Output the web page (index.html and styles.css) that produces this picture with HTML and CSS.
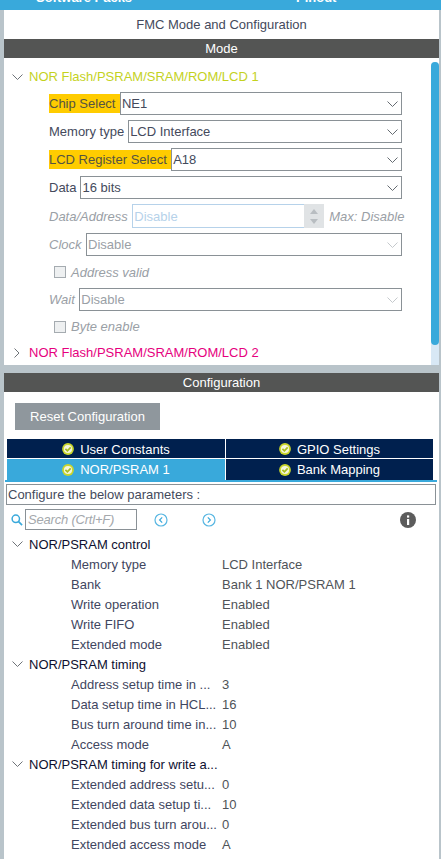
FILE: index.html
```html
<!DOCTYPE html>
<html lang="en">
<head>
<meta charset="utf-8">
<title>FMC Mode and Configuration</title>
<link rel="stylesheet" href="styles.css">
</head>
<body>
<svg class="defs" width="0" height="0" aria-hidden="true">
  <symbol id="down" viewBox="0 0 12 12"><path d="M.5 3.5l5 5 5-5" fill="none" stroke="currentColor" stroke-width="1"/></symbol>
  <symbol id="right" viewBox="0 0 12 12"><path d="M2.5 1.5 7 6l-4.5 4.5" fill="none" stroke="currentColor" stroke-width="1"/></symbol>
  <symbol id="ok" viewBox="0 0 12 12"><circle cx="6" cy="6" r="5.9" fill="#c9d62b"/><circle cx="6" cy="6" r="4.1" fill="#f4f6dc"/><path d="M3.4 5.9 5.4 7.9 8.7 4.4" fill="none" stroke="#a9bd1e" stroke-width="1.7"/></symbol>
</svg>
<div class="topbar"><span class="top-a">Software Packs</span><span class="top-b">Pinout</span></div>
<main class="mode-panel">
  <div class="title">FMC Mode and Configuration</div>
  <div class="bar">Mode</div>
  <div class="mode-body">
    <div class="mode-scroll">
      <div class="group-head lime"><svg class="twist"><use href="#down"/></svg>NOR Flash/PSRAM/SRAM/ROM/LCD 1</div>
      <div class="field"><span class="lbl hot">Chip Select</span><div class="select"><span>NE1</span><svg class="caret"><use href="#down"/></svg></div></div>
      <div class="field"><span class="lbl">Memory type</span><div class="select"><span>LCD Interface</span><svg class="caret"><use href="#down"/></svg></div></div>
      <div class="field"><span class="lbl hot">LCD Register Select</span><div class="select"><span>A18</span><svg class="caret"><use href="#down"/></svg></div></div>
      <div class="field"><span class="lbl">Data</span><div class="select"><span>16 bits</span><svg class="caret"><use href="#down"/></svg></div></div>
      <div class="field off tall">
        <span class="lbl">Data/Address</span>
        <div class="spin"><span>Disable</span><div class="spin-btn"><i class="up"></i><i class="dn"></i></div></div>
        <span class="max">Max: Disable</span>
      </div>
      <div class="field off"><span class="lbl">Clock</span><div class="select"><span>Disable</span><svg class="caret"><use href="#down"/></svg></div></div>
      <div class="check-row"><i class="box"></i>Address valid</div>
      <div class="field off tight"><span class="lbl">Wait</span><div class="select"><span>Disable</span><svg class="caret"><use href="#down"/></svg></div></div>
      <div class="check-row low"><i class="box"></i>Byte enable</div>
      <div class="group-head pink"><svg class="twist"><use href="#right"/></svg>NOR Flash/PSRAM/SRAM/ROM/LCD 2</div>
    </div>
    <div class="scrollbar"><div class="thumb"></div></div>
  </div>
</main>
<section class="config-panel">
  <div class="bar">Configuration</div>
  <div class="btn-wrap"><button class="reset">Reset Configuration</button></div>
  <div class="tabs">
    <div class="tab"><svg class="ok"><use href="#ok"/></svg>User Constants</div>
    <div class="tab"><svg class="ok"><use href="#ok"/></svg>GPIO Settings</div>
    <div class="tab active"><svg class="ok"><use href="#ok"/></svg>NOR/PSRAM 1</div>
    <div class="tab"><svg class="ok"><use href="#ok"/></svg>Bank Mapping</div>
  </div>
  <div class="tab-line"></div>
  <div class="hint">Configure the below parameters :</div>
  <div class="tools">
    <svg class="mag" viewBox="0 0 13 13"><circle cx="5.2" cy="5.2" r="4" fill="none" stroke="#39a9db" stroke-width="1.6"/><path d="M8 8l4 4" stroke="#39a9db" stroke-width="1.8"/></svg>
    <div class="search">Search (Crtl+F)</div>
    <svg class="nav nav-a" viewBox="0 0 14 14"><circle cx="7" cy="7" r="6" fill="none" stroke="#57b6e2" stroke-width="1.2"/><path d="M8.2 4.4 5.6 7l2.6 2.6" fill="none" stroke="#39a9db" stroke-width="1.2"/></svg>
    <svg class="nav nav-b" viewBox="0 0 14 14"><circle cx="7" cy="7" r="6" fill="none" stroke="#57b6e2" stroke-width="1.2"/><path d="M5.8 4.4 8.4 7l-2.6 2.6" fill="none" stroke="#39a9db" stroke-width="1.2"/></svg>
    <svg class="info" viewBox="0 0 16 16"><circle cx="8" cy="8" r="8" fill="#5c5c5c"/><rect x="7" y="7" width="2.2" height="6" fill="#fff"/><rect x="7" y="3.4" width="2.2" height="2.2" fill="#fff"/></svg>
  </div>
  <div class="tree">
    <div class="t-head"><svg class="twist"><use href="#down"/></svg>NOR/PSRAM control</div>
    <div class="t-row"><span class="k">Memory type</span><span class="v">LCD Interface</span></div>
    <div class="t-row"><span class="k">Bank</span><span class="v">Bank 1 NOR/PSRAM 1</span></div>
    <div class="t-row"><span class="k">Write operation</span><span class="v">Enabled</span></div>
    <div class="t-row"><span class="k">Write FIFO</span><span class="v">Enabled</span></div>
    <div class="t-row"><span class="k">Extended mode</span><span class="v">Enabled</span></div>
    <div class="t-head"><svg class="twist"><use href="#down"/></svg>NOR/PSRAM timing</div>
    <div class="t-row"><span class="k">Address setup time in ...</span><span class="v">3</span></div>
    <div class="t-row"><span class="k">Data setup time in HCL...</span><span class="v">16</span></div>
    <div class="t-row"><span class="k">Bus turn around time in...</span><span class="v">10</span></div>
    <div class="t-row"><span class="k">Access mode</span><span class="v">A</span></div>
    <div class="t-head"><svg class="twist"><use href="#down"/></svg>NOR/PSRAM timing for write a...</div>
    <div class="t-row"><span class="k">Extended address setu...</span><span class="v">0</span></div>
    <div class="t-row"><span class="k">Extended data setup ti...</span><span class="v">10</span></div>
    <div class="t-row"><span class="k">Extended bus turn arou...</span><span class="v">0</span></div>
    <div class="t-row"><span class="k">Extended access mode</span><span class="v">A</span></div>
  </div>
</section>
</body>
</html>
```
FILE: styles.css
```css
* { box-sizing: border-box; }
html, body { margin: 0; padding: 0; }
body {
  width: 441px;
  height: 859px;
  overflow: hidden;
  background: #b9c4ca;
  font-family: "Liberation Sans", Arial, sans-serif;
  font-size: 13px;
  color: #444a5c;
}
.defs { position: absolute; }
.topbar {
  height: 10px;
  background: #39a9db;
  overflow: hidden;
  display: flex;
  align-items: flex-end;
  color: #fff;
  font-weight: bold;
  font-size: 13px;
  line-height: 15px;
}
.topbar span { display: block; flex: none; transform: translateY(-5px); }
.top-a { margin-left: 36px; width: 260px; }
.mode-panel {
  margin: 0 2px 0 4px;
  height: 355px;
  background: #fff;
  display: flex;
  flex-direction: column;
}
.title {
  height: 29px;
  line-height: 29px;
  text-align: center;
}
.bar {
  height: 19px;
  line-height: 19px;
  background: #545554;
  color: #fff;
  text-align: center;
}
.mode-body {
  flex: 1;
  display: flex;
  min-height: 0;
}
.mode-scroll { flex: 1; min-width: 0; padding: 8px 29px 0 0; }
.group-head {
  height: 21px;
  line-height: 21px;
  display: flex;
  align-items: center;
  padding-left: 8px;
}
.twist { width: 12px; height: 12px; margin-right: 5px; color: #6e7378; flex: none; }
.lime { color: #c4d21e; }
.pink { color: #e6007e; }
.field {
  height: 23px;
  margin: 5px 0 0 45px;
  display: flex;
  align-items: center;
}
.tall { height: 24px; }
.lbl { padding-right: 4px; white-space: nowrap; flex: none; }
.hot { background: #ffcc00; height: 19px; line-height: 19px; color: #555342; padding-right: 4.4px; }
.select {
  flex: 1;
  height: 23px;
  border: 1px solid #8a9196;
  display: flex;
  align-items: center;
  justify-content: space-between;
  padding-left: 1px;
  padding-right: 2.5px;
  min-width: 0;
}
.caret { width: 12px; height: 12px; color: #666c72; flex: none; }
.off { color: #9aa0a6; font-style: italic; }
.off .lbl { padding-right: 4.5px; }
.off .select { font-style: normal; }
.off .caret { color: #c5c9cc; }
.spin {
  width: 192px;
  height: 24px;
  border: 1px solid #b6d2ea;
  display: flex;
  font-style: normal;
  color: #b6d2ea;
  align-items: center;
  padding-left: 1px;
  justify-content: space-between;
  border-right: 0;
  flex: none;
}
.spin-btn {
  width: 20px;
  height: 24px;
  background: #e0e3e5;
  display: flex;
  flex-direction: column;
  align-items: center;
  justify-content: center;
  gap: 5px;
  flex: none;
}
.up { border: 4.5px solid transparent; border-top: 0; border-bottom: 5px solid #b8bdc1; }
.dn { border: 4.5px solid transparent; border-bottom: 0; border-top: 5px solid #b8bdc1; }
.max { margin-left: 5px; white-space: nowrap; }
.check-row {
  height: 32px;
  padding-left: 50px;
  display: flex;
  align-items: center;
  color: #9aa0a6;
  font-style: italic;
}
.box {
  width: 12px;
  height: 12px;
  border: 1px solid #a5abb0;
  background: #eef0f1;
  margin-right: 5px;
  flex: none;
}
.tight { margin-top: 0; }
.low { height: 31px; }
.scrollbar {
  width: 8px;
  margin-top: 4px;
  background: #d8e8f5;
  border-radius: 4px 4px 0 0;
  flex: none;
}
.thumb { height: 283px; background: #39a9db; border-radius: 4px; }
.config-panel {
  margin: 8px 2px 0 4px;
  height: 486px;
  background: #fff;
}
.btn-wrap { padding: 11px 0 9px 11px; height: 47px; }
.reset {
  display: block;
  width: 145px;
  height: 27px;
  background: #8f979d;
  border: 0;
  color: #fff;
  font: inherit;
  padding: 0;
}
.tabs {
  margin: 0 5px 0 3px;
  display: grid;
  grid-template-columns: 218px 207px;
  grid-template-rows: 19px 21px;
  gap: 1px;
}
.tab {
  background: #00204e;
  color: #fff;
  display: flex;
  align-items: center;
  justify-content: center;
  padding-top: 1px;
}
.tab:nth-child(n+3) { padding-top: 0; }
.tab.active { background: #39a9db; }
.ok { width: 12px; height: 12px; margin-right: 6px; flex: none; }
.tab-line { height: 2px; margin: 0 2px 0 1px; background: #39a9db; }
.hint {
  height: 21px;
  line-height: 19px;
  margin: 2px 3px 0 2px;
  border: 1px solid #8a9196;
  padding-left: 1px;
}
.tools {
  height: 29px;
  display: flex;
  align-items: center;
  padding: 1px 0 0 7px;
}
.mag { width: 12px; height: 12px; flex: none; }
.search {
  width: 112px;
  height: 21px;
  line-height: 20px;
  align-self: flex-start;
  margin: 3px 0 0 2px;
  border: 1px solid #8a9196;
  padding-left: 2px;
  color: #a4a8ac;
  font-style: italic;
  letter-spacing: -.2px;
}
.nav { width: 14px; height: 14px; flex: none; }
.nav-a { margin-left: 17px; }
.nav-b { margin-left: 34px; }
.info { width: 16px; height: 16px; margin-left: 184px; flex: none; }
.t-head {
  height: 20px;
  display: flex;
  align-items: center;
  padding-left: 8px;
  color: #0e1030;
}
.t-row {
  height: 20px;
  display: flex;
  align-items: center;
  padding-left: 67px;
}
.k { width: 151px; color: #3f4660; flex: none; white-space: nowrap; }
.v { color: #4f5358; }
```
